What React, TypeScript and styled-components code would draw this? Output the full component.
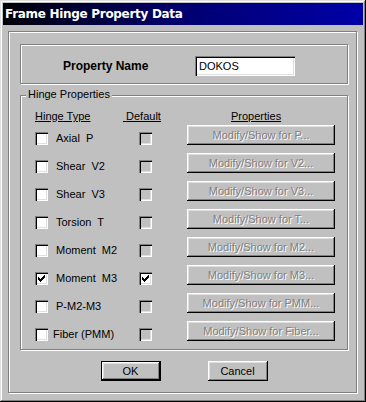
import React from 'react';
import styled, { createGlobalStyle, css } from 'styled-components';

const GlobalStyle = createGlobalStyle`
  html, body { margin: 0; padding: 0; background: #c0c0c0; }
  body { font-family: "Liberation Sans", Arial, sans-serif; font-size: 11px; color: #000; }
  * { box-sizing: border-box; }
`;

const raised = css`
  box-shadow: inset -1px -1px #000, inset 1px 1px #fff, inset -2px -2px #808080, inset 2px 2px #dfdfdf;
`;

const sunken = css`
  box-shadow: inset 1px 1px #808080, inset 2px 2px #000, inset -1px -1px #fff, inset -2px -2px #dfdfdf;
`;

const etched = css`
  border: 1px solid #808080;
  box-shadow: inset 1px 1px #fff, 1px 1px #fff;
`;

const Window = styled.div`
  width: 366px;
  height: 402px;
  padding: 3px;
  background: #c0c0c0;
  display: flex;
  flex-direction: column;
  box-shadow: inset -1px -1px #000, inset 1px 1px #dfdfdf, inset -2px -2px #808080, inset 2px 2px #fff;
`;

const TitleBar = styled.div`
  height: 22px;
  flex: none;
  display: flex;
  align-items: center;
  padding-left: 2px;
  background: linear-gradient(90deg, #000008 0%, #000070 50%, #0000a8 100%);
  color: #fff;
  font-family: "DejaVu Sans", Verdana, sans-serif;
  font-weight: bold;
  font-size: 12px;
  letter-spacing: -0.3px;
`;

const Client = styled.div`
  flex: 1;
  display: flex;
  padding: 6px 6px 6px 5px;
`;

const OuterFrame = styled.div`
  ${etched};
  flex: 1;
  display: flex;
  flex-direction: column;
  padding: 12px 8px 11px 11px;
`;

const PropFrame = styled.div`
  ${etched};
  height: 40px;
  display: flex;
  align-items: flex-start;
  padding: 11px 0 0 42px;
`;

const PropLabel = styled.div`
  width: 132px;
  margin-top: 3px;
  font-weight: bold;
  font-size: 12px;
  line-height: 14px;
`;

const TextInput = styled.div`
  width: 100px;
  height: 20px;
  background: #fff;
  ${sunken};
  padding: 0 4px;
  font-size: 11px;
  line-height: 20px;
`;

const HingeGroup = styled.div`
  ${etched};
  position: relative;
  margin-top: 11px;
  padding: 14px 0 0 14px;
`;

const Legend = styled.div`
  position: absolute;
  top: -8px;
  left: 5px;
  padding: 0 2px;
  background: #c0c0c0;
  line-height: 13px;
`;

const HeaderRow = styled.div`
  display: grid;
  grid-template-columns: 88px 64px 148px;
  line-height: 13px;
  margin-bottom: 2px;
`;

const HeaderText = styled.span<{ $indent?: number }>`
  text-decoration: underline;
  text-underline-offset: 1px;
  white-space: pre;
  padding-left: ${(p) => p.$indent ?? 0}px;
`;

const Row = styled.div`
  display: grid;
  grid-template-columns: 21px 83px 48px 148px;
  align-items: start;
  height: 28px;
`;

const CheckBox = styled.div<{ $disabled?: boolean }>`
  width: 13px;
  height: 13px;
  margin-top: 7px;
  background: ${(p) => (p.$disabled ? '#c0c0c0' : '#fff')};
  ${sunken};
  display: flex;
`;

const RowLabel = styled.span<{ $shift?: number }>`
  margin-top: 7px;
  margin-left: ${(p) => p.$shift ?? 0}px;
  line-height: 13px;
  white-space: pre;
`;

const ModifyButton = styled.div`
  width: 148px;
  height: 20px;
  ${raised};
  background: #c0c0c0;
  display: flex;
  align-items: center;
  justify-content: center;
  color: #808080;
  text-shadow: 1px 1px 0 #fff;
  line-height: 13px;
  white-space: pre;
`;

const ButtonRow = styled.div`
  display: flex;
  justify-content: center;
  gap: 47px;
  margin-top: 11px;
`;

const PushButton = styled.div<{ $default?: boolean }>`
  width: 60px;
  height: 20px;
  background: #c0c0c0;
  ${raised};
  display: flex;
  align-items: center;
  justify-content: center;
  line-height: 13px;
  ${(p) =>
    p.$default &&
    css`
      border: 1px solid #000;
    `}
`;

const Check = () => (
  <svg width="13" height="13" viewBox="0 0 13 13" shapeRendering="crispEdges">
    <path
      fill="#000"
      d="M9 3h1v1H9z M8 4h2v1H8z M3 5h1v1H3z M7 5h3v1H7z M3 6h2v1H3z M6 6h3v1H6z M3 7h5v1H3z M4 8h3v1H4z M5 9h1v1H5z"
    />
  </svg>
);

type HingeRow = {
  label: string;
  button: string;
  checked?: boolean;
  shift?: number;
};

const rows: HingeRow[] = [
  { label: 'Axial  P', button: 'Modify/Show for P...' },
  { label: 'Shear  V2', button: 'Modify/Show for V2...' },
  { label: 'Shear  V3', button: 'Modify/Show for V3...' },
  { label: 'Torsion  T', button: 'Modify/Show for T...' },
  { label: 'Moment  M2', button: 'Modify/Show for M2...' },
  { label: 'Moment  M3', button: 'Modify/Show for M3...', checked: true },
  { label: 'P-M2-M3', button: 'Modify/Show for PMM...' },
  { label: 'Fiber (PMM)', button: 'Modify/Show for Fiber...', shift: -3 },
];

export default function App() {
  return (
    <>
      <GlobalStyle />
      <Window>
        <TitleBar>Frame Hinge Property Data</TitleBar>
        <Client>
          <OuterFrame>
            <PropFrame>
              <PropLabel>Property Name</PropLabel>
              <TextInput>DOKOS</TextInput>
            </PropFrame>
            <HingeGroup>
              <Legend>Hinge Properties</Legend>
              <HeaderRow>
                <HeaderText>Hinge Type</HeaderText>
                <HeaderText>{' Default'}</HeaderText>
                <HeaderText $indent={44}>Properties</HeaderText>
              </HeaderRow>
              {rows.map((r) => (
                <Row key={r.label}>
                  <CheckBox>{r.checked && <Check />}</CheckBox>
                  <RowLabel $shift={r.shift}>{r.label}</RowLabel>
                  <CheckBox $disabled={!r.checked}>{r.checked && <Check />}</CheckBox>
                  <ModifyButton>{r.button}</ModifyButton>
                </Row>
              ))}
            </HingeGroup>
            <ButtonRow>
              <PushButton $default>OK</PushButton>
              <PushButton>Cancel</PushButton>
            </ButtonRow>
          </OuterFrame>
        </Client>
      </Window>
    </>
  );
}
